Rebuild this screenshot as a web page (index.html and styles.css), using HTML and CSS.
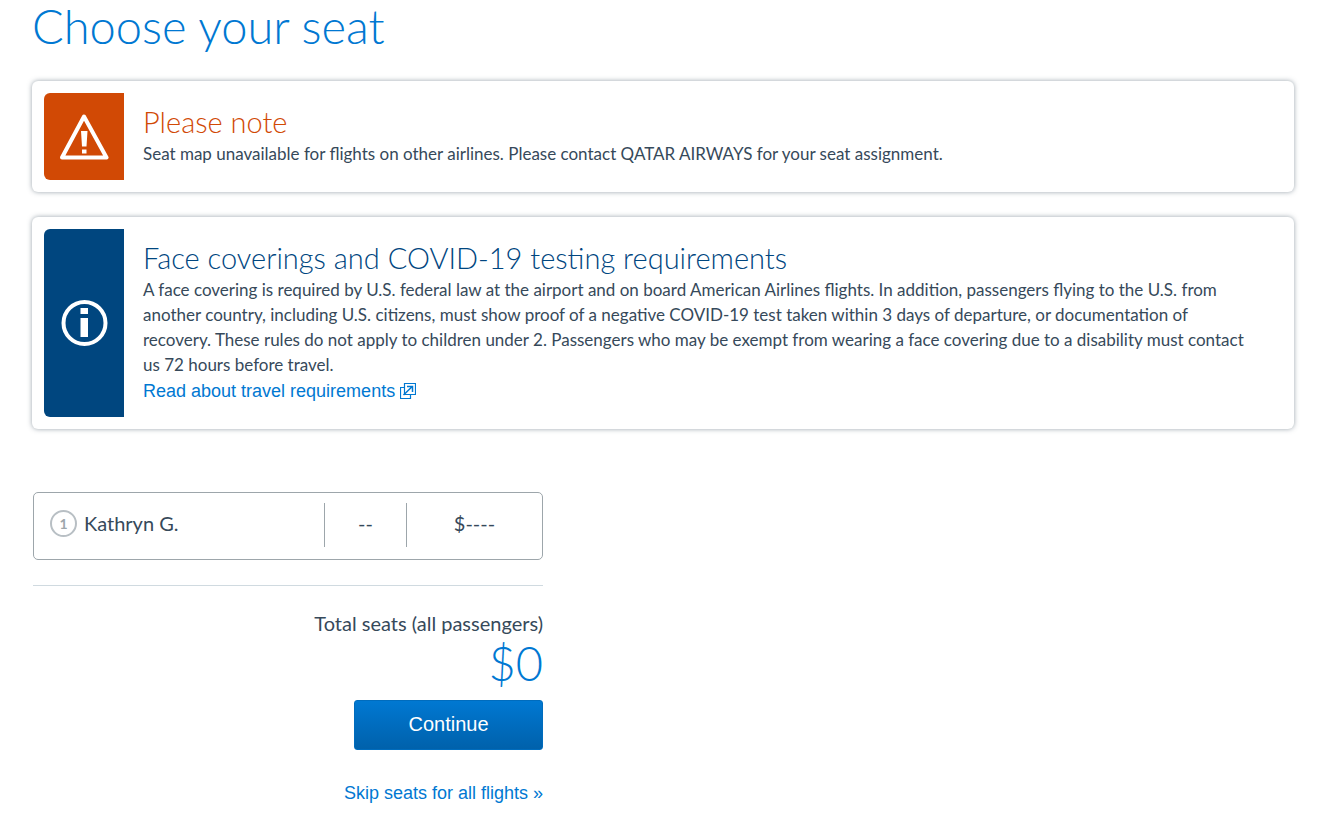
FILE: index.html
```html
<!DOCTYPE html>
<html lang="en">
<head>
    <meta charset="UTF-8">
    <meta name="viewport" content="width=device-width, initial-scale=1.0">
    <title>Choose your seat</title>
    <link rel="stylesheet" href="styles.css">
</head>
<body>

<main class="page">
    <h1 class="page-title">Choose your seat</h1>

    <section class="message message-warning">
        <div class="message-icon">
            <svg width="50" height="48" viewBox="0 0 50 48" fill="none" aria-hidden="true">
                <path d="M25 3.500 L47.500 44.500 H3 Z" stroke="#fff" stroke-width="4" stroke-linejoin="round"/>
                <path d="M22 18 H28.500 L27.500 33.500 H23 Z M23 36.500 H27.500 V40.500 H23 Z" fill="#fff"/>
            </svg>
        </div>
        <div class="message-body">
            <h2>Please note</h2>
            <p>Seat map unavailable for flights on other airlines. Please contact QATAR AIRWAYS for your seat assignment.</p>
        </div>
    </section>

    <section class="message message-info">
        <div class="message-icon">
            <svg width="48" height="48" viewBox="0 0 48 48" fill="none" aria-hidden="true">
                <circle cx="24.500" cy="24" r="21" stroke="#fff" stroke-width="4"/>
                <path d="M20.500 9 H28 V15 H20.500 Z M20.500 19 H28 V38 H20.500 Z" fill="#fff"/>
            </svg>
        </div>
        <div class="message-body">
            <h2>Face coverings and COVID-19 testing requirements</h2>
            <p>A face covering is required by U.S. federal law at the airport and on board American Airlines flights. In addition, passengers flying to the U.S. from another country, including U.S. citizens, must show proof of a negative COVID-19 test taken within 3 days of departure, or documentation of recovery. These rules do not apply to children under 2. Passengers who may be exempt from wearing a face covering due to a disability must contact us 72 hours before travel.</p>
            <a class="link" href="#">Read about travel requirements
                <svg class="link-icon" width="16" height="16" viewBox="0 0 16 16" fill="none" stroke="currentColor" aria-hidden="true">
                    <path d="M4.500 0.500 H15.500 V11.500 H4.500 Z M4.500 4.500 H0.500 V15.500 H10.500 V11.500" stroke-width="1.200"/>
                    <path d="M3.500 12 L12 3.800 M7 3.500 H12.500 V9" stroke-width="1.500"/>
                </svg>
            </a>
        </div>
    </section>

    <div class="summary">
        <div class="passenger">
            <div class="passenger-name"><span class="passenger-number">1</span>Kathryn G.</div>
            <div class="passenger-seat">--</div>
            <div class="passenger-price">$----</div>
        </div>
        <div class="total">
            <p class="total-label">Total seats (all passengers)</p>
            <p class="total-price">$0</p>
            <button type="button" class="btn">Continue</button>
            <a class="link" href="#">Skip seats for all flights »</a>
        </div>
    </div>
</main>

</body>
</html>
```

FILE: styles.css
```css
* {
    box-sizing: border-box;
}

body {
    margin: 0;
    background-color: #fff;
    color: #36495a;
    font-family: Lato, "Open Sans", sans-serif;
    font-size: 17px;
    line-height: 25px;
}

h1, h2, p {
    margin: 0;
}

h1, h2 {
    font-weight: 300;
}

.page {
    padding: 0 36px 16px 32px;
}

.page-title {
    margin-bottom: 29px;
    color: #0078d2;
    font-size: 47px;
    line-height: 52px;
}

/* Message boxes */
.message {
    display: flex;
    margin-bottom: 25px;
    padding: 12px;
    border-radius: 6px;
    box-shadow: 0 0 5px rgba(54, 73, 90, 0.5);
}

.message-icon {
    display: flex;
    flex: 0 0 80px;
    align-items: center;
    justify-content: center;
    border-radius: 6px 0 0 6px;
}

.message-body {
    padding: 12px 25px 13px 19px;
}

.message-body h2 {
    margin-bottom: 2px;
    font-size: 29px;
    line-height: 34px;
}

.message-body p {
    margin-bottom: 1px;
}

.message-warning .message-icon {
    background-color: #d14905;
}

.message-warning h2 {
    color: #d14905;
}

.message-info .message-icon {
    background-color: #00467f;
}

.message-info h2 {
    color: #00467f;
}

.link {
    display: block;
    color: #0078d2;
    font-family: "Liberation Sans", Arial, sans-serif;
    font-size: 18px;
    line-height: 26px;
    text-decoration: none;
}

.link:hover {
    text-decoration: underline;
}

.link-icon {
    vertical-align: -2px;
}

/* Passenger and total */
.summary {
    max-width: 511px;
    margin-top: 63px;
    padding-left: 1px;
    font-size: 20px;
}

.passenger {
    display: flex;
    padding: 10px 0 12px;
    border: 1px solid #9da6ab;
    border-radius: 5px;
    line-height: 40px;
    text-align: center;
}

.passenger-name {
    display: flex;
    flex: 1;
    align-items: center;
    gap: 7px;
    padding: 0 0 4px 16px;
}

.passenger-number {
    width: 27px;
    height: 27px;
    border: 2px solid #b8bfc4;
    border-radius: 50%;
    color: #9da6ab;
    font-size: 14px;
    font-weight: 700;
    line-height: 23px;
}

.passenger-seat,
.passenger-price {
    padding-bottom: 4px;
    border-left: 1px solid #9da6ab;
}

.passenger-seat {
    width: 82px;
}

.passenger-price {
    width: 136px;
}

.total {
    display: flex;
    flex-direction: column;
    align-items: flex-end;
    margin-top: 25px;
    padding-top: 25px;
    border-top: 1px solid #d0dae0;
}

.total-price {
    margin-bottom: 10px;
    color: #0078d2;
    font-size: 47px;
    font-weight: 300;
    line-height: 54px;
}

.btn {
    width: 189px;
    height: 50px;
    margin-bottom: 30px;
    padding: 0 0 2px;
    border: 1px solid #006cbd;
    border-radius: 3px;
    background: linear-gradient(#0078d2, #0061ab);
    color: #fff;
    font-family: "Liberation Sans", Arial, sans-serif;
    font-size: 20px;
    cursor: pointer;
}

.btn:hover {
    background: #0061ab;
}
```
